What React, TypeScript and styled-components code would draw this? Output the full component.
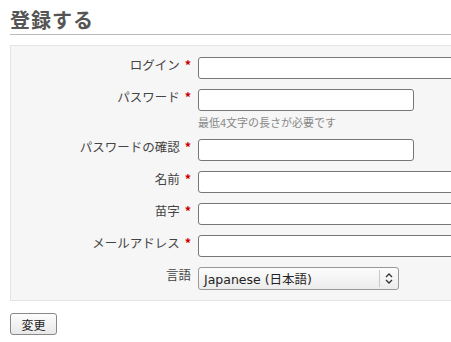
import React from "react";
import styled, { createGlobalStyle } from "styled-components";

const GlobalStyle = createGlobalStyle`
  html, body {
    margin: 0;
    padding: 0;
    overflow: hidden;
    background: #fff;
  }
  body {
    font-family: "DejaVu Sans", "Noto Sans CJK JP", sans-serif;
    color: #333;
  }
`;

interface Field {
  label: string;
  required?: boolean;
  width: number;
  hint?: string;
}

const fields: Field[] = [
  { label: "ログイン", required: true, width: 300 },
  { label: "パスワード", required: true, width: 216, hint: "最低4文字の長さが必要です" },
  { label: "パスワードの確認", required: true, width: 216 },
  { label: "名前", required: true, width: 300 },
  { label: "苗字", required: true, width: 300 },
  { label: "メールアドレス", required: true, width: 300 },
];

export default function App() {
  return (
    <Page>
      <GlobalStyle />
      <Title>登録する</Title>
      <Box>
        {fields.map((f) => (
          <Row key={f.label}>
            <Label>
              {f.label}
              {f.required && <Star>*</Star>}
            </Label>
            <FieldCol>
              <TextInput $width={f.width} type={f.label.startsWith("パスワード") ? "password" : "text"} />
              {f.hint && <Hint>{f.hint}</Hint>}
            </FieldCol>
          </Row>
        ))}
        <Row>
          <Label>言語</Label>
          <FieldCol>
            <Select>
              <SelectText>Japanese (日本語)</SelectText>
              <SelectArrow>
                <svg width="8" height="11" viewBox="0 0 8 11">
                  <path d="M1 4 L4 1 L7 4 M1 7 L4 10 L7 7" fill="none" stroke="#333" strokeWidth="1.3" />
                </svg>
              </SelectArrow>
            </Select>
          </FieldCol>
        </Row>
      </Box>
      <Button>変更</Button>
    </Page>
  );
}

const Page = styled.div`
  width: 620px;
  padding: 8px 0 0 10px;
`;

const Title = styled.h2`
  margin: 0;
  font-size: 20px;
  line-height: 24px;
  font-weight: bold;
  color: #555;
  font-family: "Noto Sans CJK JP", sans-serif;
  letter-spacing: 1px;
  border-bottom: 1px solid #bbb;
  padding-bottom: 2px;
`;

const Box = styled.div`
  margin-top: 10px;
  background: #f6f6f6;
  border: 1px solid #e4e4e4;
  padding: 6px 0 5px;
`;

const Row = styled.div`
  display: flex;
  align-items: flex-start;
  padding: 5px 0;
`;

const Label = styled.div`
  width: 180px;
  flex: none;
  text-align: right;
  padding-right: 2px;
  margin-right: 5px;
  font-size: 12.5px;
  line-height: 15px;
  color: #444;
  font-family: "Noto Sans CJK JP", sans-serif;
  white-space: nowrap;
`;

const Star = styled.span`
  margin-left: 5px;
  color: #c00;
  font-weight: bold;
`;

const FieldCol = styled.div`
  display: flex;
  flex-direction: column;
`;

const TextInput = styled.input<{ $width: number }>`
  box-sizing: border-box;
  width: ${(p) => p.$width}px;
  height: 22px;
  margin: 0;
  border: 1px solid #777;
  border-radius: 3px;
  background: #fff;
  padding: 0 4px;
  font-size: 12px;
`;

const Hint = styled.div`
  margin-top: 5px;
  font-size: 11px;
  line-height: 13px;
  color: #888;
  font-family: "Noto Sans CJK JP", sans-serif;
`;

const Select = styled.div`
  box-sizing: border-box;
  width: 201px;
  height: 23px;
  display: flex;
  align-items: center;
  border: 1px solid #999;
  border-radius: 3px;
  background: linear-gradient(#fcfcfc, #ececec);
`;

const SelectText = styled.span`
  flex: 1;
  padding-left: 5px;
  font-size: 12.5px;
  color: #222;
  font-family: "DejaVu Sans", "Noto Sans CJK JP", sans-serif;
  white-space: nowrap;
`;

const SelectArrow = styled.span`
  width: 18px;
  height: 17px;
  display: flex;
  align-items: center;
  justify-content: center;
  border-left: 1px solid #c8c8c8;
`;

const Button = styled.button`
  box-sizing: border-box;
  margin-top: 12px;
  width: 47px;
  height: 22px;
  padding: 0;
  border: 1px solid #888;
  border-radius: 3px;
  background: linear-gradient(#fdfdfd, #e8e8e8);
  font-size: 12px;
  color: #222;
  font-family: "Noto Sans CJK JP", sans-serif;
`;
